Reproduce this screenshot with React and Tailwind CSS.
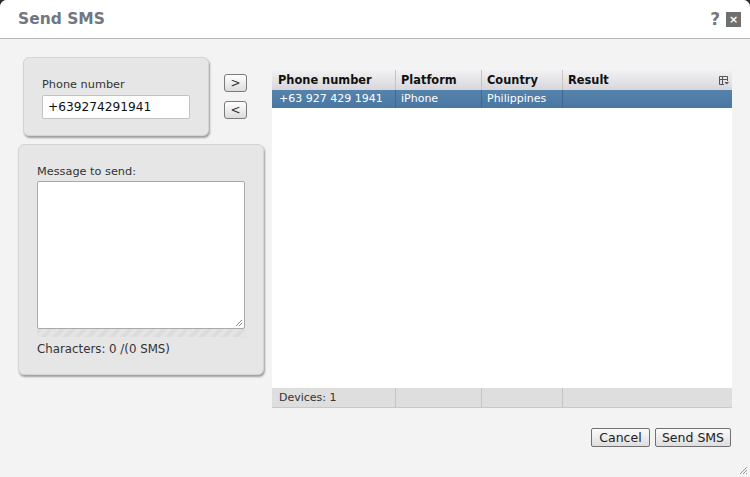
import React from "react";

const font = { fontFamily: '"DejaVu Sans", Verdana, sans-serif' };

function ArrowBtn({ children }) {
  return (
    <button className="w-[23px] h-[18px] border border-[#7a7a7a] rounded-[3px] bg-gradient-to-b from-[#ffffff] to-[#dcdcdc] text-[12px] leading-[14px] text-[#333] flex items-center justify-center">
      {children}
    </button>
  );
}

function FootBtn({ children, w }) {
  return (
    <button className={`${w} h-[19px] border border-[#707070] rounded-[2px] bg-gradient-to-b from-[#fbfbfb] to-[#dedede] text-[12.5px] leading-[16px] text-[#222] flex items-center justify-center`}>
      {children}
    </button>
  );
}

export default function App() {
  return (
    <div className="w-[750px] h-[477px] bg-[#2a2a2a] text-[#222]" style={font}>
      <div className="w-full h-full bg-[#f3f3f3] rounded-t-[7px] overflow-hidden flex flex-col relative">
        {/* title */}
        <div className="h-[39px] bg-white border-b border-[#b5b5b5] flex items-center pl-[18px] pr-[9px] shrink-0">
          <div className="text-[15.5px] font-bold text-[#707780] mt-[2px]">Send SMS</div>
          <div className="ml-auto flex items-center gap-[6px]">
            <span className="text-[17px] font-bold text-[#777] leading-none">?</span>
            <span className="w-[15px] h-[15px] bg-[#6f6f6f] text-white text-[11px] font-bold flex items-center justify-center leading-none">×</span>
          </div>
        </div>
        {/* body */}
        <div className="flex pl-[18px] pt-[18px] flex-1">
          {/* left col */}
          <div className="flex flex-col w-[246px]">
            <div className="flex">
              <div className="ml-[5px] w-[186px] h-[79px] bg-[#e6e6e6] border border-[#d4d4d4] rounded-[6px] shadow-[1px_2px_2px_rgba(0,0,0,0.35)] pl-[18px] pt-[20px]">
                <div className="text-[11.3px] leading-[14px] text-[#333]">Phone number</div>
                <div className="mt-[3px] w-[148px] h-[24px] bg-white border border-[#c2c2c2] rounded-[2px] text-[12.2px] pl-[5px] flex items-center text-[#111]">
                  +639274291941
                </div>
              </div>
              <div className="flex flex-col gap-[9px] ml-[15px] mt-[17px]">
                <ArrowBtn>&gt;</ArrowBtn>
                <ArrowBtn>&lt;</ArrowBtn>
              </div>
            </div>
            <div className="mt-[8px] w-[246px] h-[231px] bg-[#e6e6e6] border border-[#d4d4d4] rounded-[6px] shadow-[1px_2px_2px_rgba(0,0,0,0.35)] pl-[18px] pt-[20px]">
              <div className="text-[11.3px] leading-[14px] text-[#333]">Message to send:</div>
              <div className="relative mt-[2px] w-[208px] h-[148px] bg-white border border-[#a9a9a9] rounded-[2px]">
                <svg className="absolute right-[1px] bottom-[1px]" width="8" height="8" viewBox="0 0 8 8">
                  <path d="M7 1 L1 7 M7 4 L4 7" stroke="#888" strokeWidth="1" />
                </svg>
              </div>
              <div className="w-[208px] h-[8px] bg-[repeating-linear-gradient(135deg,#dcdcdc_0px,#dcdcdc_4px,#e4e4e4_4px,#e4e4e4_8px)]"></div>
              <div className="mt-[5px] text-[11.8px] leading-[14px] text-[#333]">Characters: 0 /(0 SMS)</div>
            </div>
          </div>
          {/* grid */}
          <div className="ml-[8px] mt-[13px] flex flex-col">
            <div className="w-[460px] h-[338px] bg-white flex flex-col">
              <div className="h-[20px] flex bg-gradient-to-b from-[#f2f2f4] to-[#d7d6db] text-[11.4px] font-bold text-[#111] leading-[20px]">
                <div className="w-[124px] pl-[6px] border-r border-[#c4c4c4]">Phone number</div>
                <div className="w-[86px] pl-[5px] border-r border-[#c4c4c4]">Platform</div>
                <div className="w-[81px] pl-[5px] border-r border-[#c4c4c4]">Country</div>
                <div className="flex-1 pl-[5px] flex items-center">
                  <span>Result</span>
                  <svg className="ml-auto mr-[3px]" width="10" height="9" viewBox="0 0 10 9">
                    <path d="M0.5 0.5 H8.5 V5 M0.5 0.5 V8.5 H5 M0.5 3.5 H8.5 M3.5 0.5 V8.5" stroke="#555" strokeWidth="1" fill="none" />
                    <path d="M5.5 6 H10 L7.75 8.5 Z" fill="#555" />
                  </svg>
                </div>
              </div>
              <div className="h-[18px] flex bg-gradient-to-b from-[#5683ac] to-[#4a77a2] text-[11px] text-white leading-[18px]">
                <div className="w-[124px] pl-[7px] border-r border-[#3f6890]">+63 927 429 1941</div>
                <div className="w-[86px] pl-[5px] border-r border-[#3f6890]">iPhone</div>
                <div className="w-[81px] pl-[5px] border-r border-[#3f6890]">Philippines</div>
                <div className="flex-1"></div>
              </div>
              <div className="flex-1"></div>
              <div className="h-[20px] flex bg-[#dedede] border-b border-[#c8c8c8] text-[11px] text-[#333] leading-[20px]">
                <div className="w-[124px] pl-[7px] border-r border-[#c4c4c4]">Devices: 1</div>
                <div className="w-[86px] border-r border-[#c4c4c4]"></div>
                <div className="w-[81px] border-r border-[#c4c4c4]"></div>
                <div className="flex-1"></div>
              </div>
            </div>
            <div className="mt-[20px] flex justify-end gap-[5px] pr-[1px]">
              <FootBtn w="w-[59px]">Cancel</FootBtn>
              <FootBtn w="w-[76px]">Send SMS</FootBtn>
            </div>
          </div>
        </div>
        <svg className="absolute right-[2px] bottom-[2px]" width="10" height="10" viewBox="0 0 10 10">
          <path d="M9 2 L2 9 M9 5 L5 9 M9 8 L8 9" stroke="#999" strokeWidth="1" />
        </svg>
      </div>
    </div>
  );
}
